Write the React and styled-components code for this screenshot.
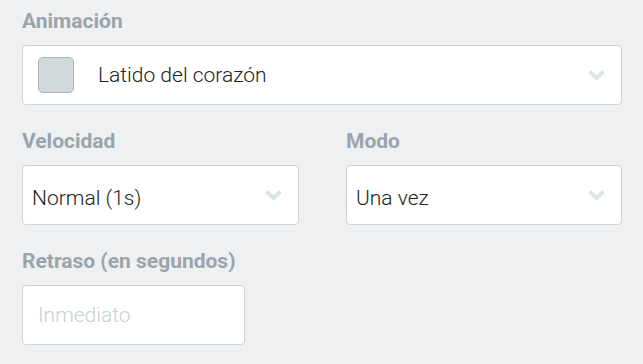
import React from "react";
import styled, { createGlobalStyle } from "styled-components";

const GlobalStyle = createGlobalStyle`
  html, body {
    margin: 0;
    padding: 0;
    background: #eff0f2;
    font-family: Roboto, "Liberation Sans", Arial, sans-serif;
  }
`;

const Form = styled.div`
  padding: 9px 21px 0 22px;
  width: 600px;
`;

const Row = styled.div`
  display: grid;
  grid-template-columns: 277px 276px;
  column-gap: 47px;
`;

const Field = styled.div`
  margin-bottom: 24px;
`;

const Label = styled.div`
  font-size: 21px;
  line-height: 24px;
  font-weight: 700;
  color: #9aa5ab;
  margin-bottom: 12px;
`;

const SelectBox = styled.div`
  box-sizing: border-box;
  height: 60px;
  display: flex;
  align-items: center;
  background: #fff;
  border: 1px solid #cfd3d6;
  border-radius: 4px;
  padding: 0 15px 0 ${(p) => (p.$swatch ? "15px" : "9px")};
  cursor: pointer;
`;

const Swatch = styled.span`
  box-sizing: border-box;
  width: 36px;
  height: 36px;
  border-radius: 5px;
  background: #d1d9dd;
  border: 1px solid #a9b4b9;
  margin-right: 24px;
  flex-shrink: 0;
`;

const Value = styled.span`
  flex: 1;
  font-size: 21px;
  font-weight: 300;
  color: #222;
  padding-top: ${(p) => (p.$low ? "5px" : "0")};
`;

const Chevron = styled.svg`
  width: 19px;
  height: 12px;
  flex-shrink: 0;
`;

const TextInput = styled.input`
  box-sizing: border-box;
  width: 223px;
  height: 60px;
  background: #fff;
  border: 1px solid #cfd3d6;
  border-radius: 4px;
  padding: 0 15px;
  font-family: inherit;
  font-size: 21px;
  font-weight: 300;
  color: #222;
  outline: none;

  &::placeholder {
    color: #c7d0d4;
  }
`;

const ChevronIcon = () => (
  <Chevron viewBox="0 0 19 12">
    <polyline
      points="2.5,2.5 9.5,9 16.5,2.5"
      fill="none"
      stroke="#dde4e7"
      strokeWidth="4"
    />
  </Chevron>
);

const Select = ({ value, swatch }) => (
  <SelectBox $swatch={swatch}>
    {swatch && <Swatch />}
    <Value $low={!swatch}>{value}</Value>
    <ChevronIcon />
  </SelectBox>
);

const App = () => (
  <>
    <GlobalStyle />
    <Form>
      <Field>
        <Label>Animación</Label>
        <Select value="Latido del corazón" swatch />
      </Field>
      <Row>
        <Field>
          <Label>Velocidad</Label>
          <Select value="Normal (1s)" />
        </Field>
        <Field>
          <Label>Modo</Label>
          <Select value="Una vez" />
        </Field>
      </Row>
      <Field>
        <Label>Retraso (en segundos)</Label>
        <TextInput placeholder="Inmediato" />
      </Field>
    </Form>
  </>
);

export default App;
